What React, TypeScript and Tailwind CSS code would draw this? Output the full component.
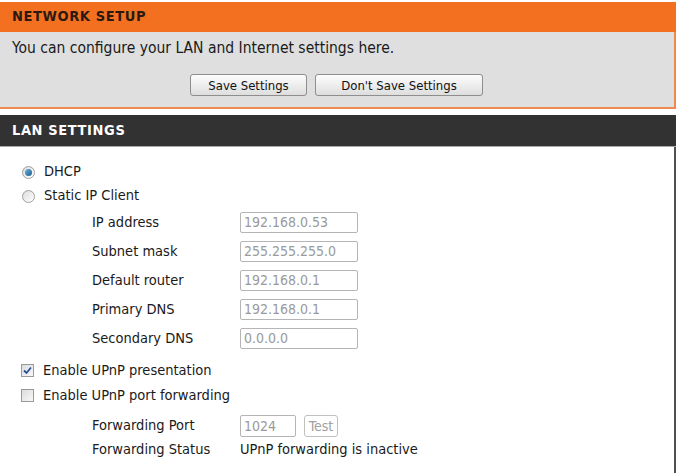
import React from "react";

const font = { fontFamily: '"DejaVu Sans Condensed", "DejaVu Sans", Tahoma, sans-serif' };

function Radio({ checked }: { checked?: boolean }) {
  return (
    <span className="flex h-[13px] w-[13px] items-center justify-center rounded-full border border-[#a0a0a0] bg-gradient-to-br from-[#dcdcdc] to-[#ffffff]">
      {checked && (
        <span className="h-[7px] w-[7px] rounded-full bg-gradient-to-br from-[#6ab0de] to-[#1b5e8c]" />
      )}
    </span>
  );
}

function Check({ checked }: { checked?: boolean }) {
  return (
    <span className="flex h-[13px] w-[13px] items-center justify-center border border-[#9a9a9a] bg-gradient-to-br from-[#dcdcdc] to-[#f8f8f8]">
      {checked && (
        <svg width="9" height="9" viewBox="0 0 9 9">
          <path d="M1 4.5 L3.5 7 L8 1.5" fill="none" stroke="#2a4f9a" strokeWidth="1.8" />
        </svg>
      )}
    </span>
  );
}

function Btn({ children, className }: { children: React.ReactNode; className?: string }) {
  return (
    <button
      className={
        "h-[22px] rounded-[3px] border border-[#8e8e8e] bg-gradient-to-b from-[#fdfdfd] to-[#dedede] text-[13px] text-[#111] " +
        (className ?? "")
      }
    >
      {children}
    </button>
  );
}

function Field({ label, value }: { label: string; value: string }) {
  return (
    <div className="flex h-[29px] items-center">
      <span className="box-content w-[148px] pl-[92px]">{label}</span>
      <div className="flex h-[21px] w-[118px] items-center rounded-[2px] border border-[#b5b5b5] bg-white px-[3px] text-[14px] text-[#9a9a9a]">
        {value}
      </div>
    </div>
  );
}

export default function App() {
  return (
    <div className="h-[473px] w-[681px] overflow-hidden bg-white pt-[2px] text-[14.5px] text-[#1a1a1a]" style={font}>
      <div className="w-[676px]">
        <div className="flex h-[30px] items-center bg-[#f37021] pl-3 text-[14.5px] font-bold tracking-[0.6px] text-[#2a1a10]">
          NETWORK SETUP
        </div>
        <div className="h-[77px] border-b-2 border-r-2 border-[#ef8a4e] bg-[#dfdfdf]">
          <div className="pl-3 pt-[5px] text-[15.5px]">You can configure your LAN and Internet settings here.</div>
          <div className="flex gap-[8px] pl-[190px] pt-[14px]">
            <Btn className="w-[117px]">Save Settings</Btn>
            <Btn className="w-[168px]">Don't Save Settings</Btn>
          </div>
        </div>
        <div className="h-[6px]" />
        <div className="flex h-[32px] items-center border-b border-[#a8a8a8] bg-[#323232] pl-3 text-[14.5px] font-bold tracking-[0.6px] text-white">
          LAN SETTINGS
        </div>
        <div className="h-[327px] border-r-2 border-[#505050] pt-[13px]">
          <div className="flex h-[24px] items-center gap-[9px] pl-[22px]">
            <Radio checked />
            <span>DHCP</span>
          </div>
          <div className="flex h-[24px] items-center gap-[9px] pl-[22px]">
            <Radio />
            <span>Static IP Client</span>
          </div>
          <Field label="IP address" value="192.168.0.53" />
          <Field label="Subnet mask" value="255.255.255.0" />
          <Field label="Default router" value="192.168.0.1" />
          <Field label="Primary DNS" value="192.168.0.1" />
          <Field label="Secondary DNS" value="0.0.0.0" />
          <div className="mt-[5px] flex h-[25px] items-center gap-[9px] pl-[21px]">
            <Check checked />
            <span>Enable UPnP presentation</span>
          </div>
          <div className="flex h-[25px] items-center gap-[9px] pl-[21px]">
            <Check />
            <span>Enable UPnP port forwarding</span>
          </div>
          <div className="mt-[4px] flex h-[28px] items-center">
            <span className="box-content w-[148px] pl-[92px]">Forwarding Port</span>
            <div className="flex h-[22px] w-[56px] items-center rounded-[2px] border border-[#b5b5b5] px-[3px] text-[14px] text-[#9a9a9a]">
              1024
            </div>
            <div className="ml-[8px] flex h-[22px] w-[34px] items-center justify-center rounded-[3px] border border-[#c0c0c0] text-[14px] text-[#a0a0a0]">
              Test
            </div>
          </div>
          <div className="flex h-[20px] items-center">
            <span className="box-content w-[148px] pl-[92px]">Forwarding Status</span>
            <span>UPnP forwarding is inactive</span>
          </div>
        </div>
      </div>
    </div>
  );
}
